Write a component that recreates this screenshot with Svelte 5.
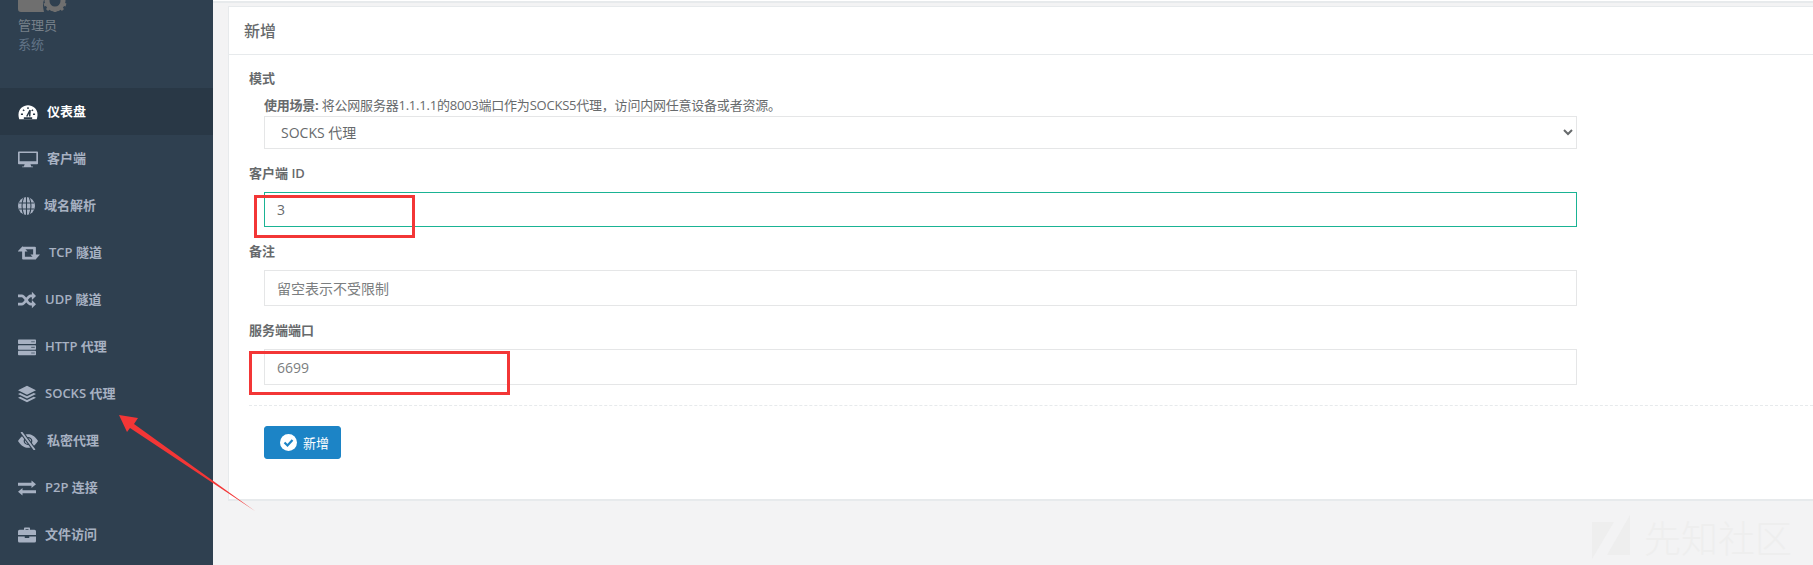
<script>
  const navItems = [
    { icon: "dashboard", label: "仪表盘", w: 20, active: true },
    { icon: "desktop", label: "客户端", w: 20 },
    { icon: "globe", label: "域名解析", w: 17 },
    { icon: "retweet", label: "TCP 隧道", w: 22 },
    { icon: "shuffle", label: "UDP 隧道", w: 18 },
    { icon: "server", label: "HTTP 代理", w: 18 },
    { icon: "layers", label: "SOCKS 代理", w: 18 },
    { icon: "eyeslash", label: "私密代理", w: 20 },
    { icon: "exchange", label: "P2P 连接", w: 18 },
    { icon: "briefcase", label: "文件访问", w: 18 }
  ];
</script>

<div class="page">
  <aside class="sidebar">
    <div class="profile">
      <svg class="logo" width="50" height="13" viewBox="0 0 50 13">
        <path d="M0 0h26q-2 4 0 12H3q-3 0-3-3z" fill="#6f6f6f" />
        <circle cx="37" cy="1" r="8" fill="none" stroke="#6f6f6f" stroke-width="5" />
        <path d="M37 9v3M29 4l-3 1M45 4l3 1M31 8l-2 2M43 8l2 2" stroke="#6f6f6f" stroke-width="3" />
      </svg>
      <div class="role">管理员</div>
      <div class="system">系统</div>
    </div>
    <nav>
      {#each navItems as item}
        <div class="nav-item" class:active={item.active}>
          <svg width={item.w} height="18" viewBox="0 0 24 24" preserveAspectRatio="none" fill="currentColor">
            {#if item.icon === "dashboard"}
              <path d="M1.500 21.500C-2 10 5 3 12 3s14 7 10.500 18.500z" />
              <path d="M3.500 15h2.500M6 9l1.500 1.500M12 5.500V8M18 9l-1.500 1.500M18 15h2.500M10.500 18l4-8.500-.5 8.500" stroke="#293846" stroke-width="1.800" fill="none" />
              <rect x="7" y="19" width="10" height="2.500" fill="#293846" />
            {:else if item.icon === "desktop"}
              <path d="M1 2h22a1 1 0 0 1 1 1v15a1 1 0 0 1-1 1h-8l1 3h2v1H5v-1h2l1-3H1a1 1 0 0 1-1-1V3a1 1 0 0 1 1-1zm1 2v11h20V4z" fill-rule="evenodd" />
            {:else if item.icon === "globe"}
              <circle cx="12" cy="12" r="12" />
              <path d="M12 0v24M8 .5C5 8 5 16 8 23.500M16 .5c3 7.500 3 15.500 0 23M1 8h22M1 16h22" stroke="#2f4050" stroke-width="1.500" fill="none" />
            {:else if item.icon === "retweet"}
              <path d="M5 3l5.500 7H7.500v7H16l3 3.500H5.500a1 1 0 0 1-1-1V10H-.5zM19 21l-5.500-7h3V7H8L5 3.500h13.500a1 1 0 0 1 1 1V14h4.500z" />
            {:else if item.icon === "shuffle"}
              <path d="M0 6.500h5c5 0 7 11 12 11h2M0 17.500h5c5 0 7-11 12-11h2" fill="none" stroke="currentColor" stroke-width="3.500" />
              <path d="M18.500 1l5.500 5.500-5.500 5.500zM18.500 12l5.500 5.500-5.500 5.500z" />
            {:else if item.icon === "server"}
              <path d="M1 2h22a1 1 0 0 1 1 1v4a1 1 0 0 1-1 1H1a1 1 0 0 1-1-1V3a1 1 0 0 1 1-1zM1 9.500h22a1 1 0 0 1 1 1v4a1 1 0 0 1-1 1H1a1 1 0 0 1-1-1v-4a1 1 0 0 1 1-1zM1 17h22a1 1 0 0 1 1 1v4a1 1 0 0 1-1 1H1a1 1 0 0 1-1-1v-4a1 1 0 0 1 1-1z" />
              <path d="M18 5h1.500M20.500 5H22M18 12.500h1.500M20.500 12.500H22M18 20h1.500M20.500 20H22" stroke="#2f4050" stroke-width="1.500" />
            {:else if item.icon === "layers"}
              <path d="M12 1l12 6-12 6L0 7zM3 10.500l9 4.500 9-4.500 3 1.500-12 6-12-6zM3 15.500l9 4.500 9-4.500 3 1.500-12 6-12-6z" />
            {:else if item.icon === "eyeslash"}
              <path d="M0 12C4 5 8 3 12 3s8 2 12 9c-4 7-8 9-12 9S4 19 0 12z" />
              <circle cx="12" cy="12" r="4.500" fill="none" stroke="#2f4050" stroke-width="1.500" />
              <path d="M4 0l16 24" stroke="#2f4050" stroke-width="5" />
              <path d="M4 0l16 24" stroke="currentColor" stroke-width="2.200" />
            {:else if item.icon === "exchange"}
              <path d="M24 7l-6-5v3H0v4h18v3zM0 17l6-5v3h18v4H6v3z" />
            {:else if item.icon === "briefcase"}
              <path d="M8 5V3a1 1 0 0 1 1-1h6a1 1 0 0 1 1 1v2h6a2 2 0 0 1 2 2v5H0V7a2 2 0 0 1 2-2zm2 0h4V4h-4zM0 14h9v2h6v-2h9v6a2 2 0 0 1-2 2H2a2 2 0 0 1-2-2z" fill-rule="evenodd" />
            {/if}
          </svg>
          <span>{item.label}</span>
        </div>
      {/each}
    </nav>
  </aside>

  <main class="content">
    <div class="topbar"></div>
    <section class="card">
      <h5 class="card-title">新增</h5>
      <form class="card-body">
        <div class="label first">模式</div>
        <div class="hint"><b>使用场景:</b> 将公网服务器1.1.1.1的8003端口作为SOCKS5代理，访问内网任意设备或者资源。</div>
        <select class="control select">
          <option>SOCKS 代理</option>
        </select>

        <div class="label">客户端 ID</div>
        <input class="control focus" value="3" />

        <div class="label">备注</div>
        <input class="control tall" placeholder="留空表示不受限制" />

        <div class="label">服务端端口</div>
        <input class="control tall" placeholder="6699" />

        <div class="dashed"></div>

        <button type="button" class="btn">
          <svg width="17" height="17" viewBox="0 0 17 17">
            <circle cx="8.500" cy="8.500" r="8.500" fill="#fff" />
            <path d="M4.500 8.500l3 3 5-5.500" fill="none" stroke="#1c84c6" stroke-width="2.200" />
          </svg>
          新增
        </button>
      </form>
    </section>
  </main>

  <!-- annotations drawn on top of the screenshot -->
  <div class="mark mark-client"></div>
  <div class="mark mark-port"></div>
  <svg class="arrow" width="300" height="120" viewBox="0 0 300 120">
    <polygon points="119,15 138,18 134,24 255,111 130,28 127,32" fill="#f33636" />
  </svg>

  <div class="watermark">
    <svg width="40" height="44" viewBox="0 0 40 44">
      <path d="M0 7h22L0 44zM38 0v40H15z" fill="#eeeeee" />
    </svg>
    <span>先知社区</span>
  </div>
</div>

<style>
  :global(body) {
    margin: 0;
    background: #f3f3f4;
    overflow: hidden;
  }

  .page {
    position: relative;
    display: flex;
    width: 1813px;
    height: 565px;
    overflow: hidden;
    font-family: "Open Sans", "Noto Sans CJK SC", sans-serif;
    color: #676a6c;
    font-size: 13px;
  }

  .sidebar {
    width: 213px;
    flex: none;
    background: #2f4050;
  }

  .profile {
    height: 88px;
    padding-left: 18px;
    box-sizing: border-box;
  }

  .logo {
    display: block;
  }

  .role,
  .system {
    font-size: 13px;
    line-height: 19px;
  }

  .role {
    margin-top: 3px;
    color: #77808a;
  }

  .system {
    color: #627487;
  }

  .nav-item {
    display: flex;
    align-items: center;
    gap: 9px;
    height: 47px;
    padding-left: 18px;
    color: #a7b1c2;
    font-weight: 600;
    font-size: 13px;
  }

  .nav-item span {
    padding-bottom: 2px;
  }

  .nav-item.active {
    background: #293846;
    color: #fff;
  }

  .content {
    flex: 1;
    min-width: 0;
  }

  .topbar {
    height: 1px;
    background: #fff;
    border-bottom: 2px solid #e7eaec;
  }

  .card {
    margin: 3px 0 0 15px;
    background: #fff;
    border: 1px solid #e7eaec;
    border-width: 1px 0 2px 1px;
    height: 495px;
    box-sizing: border-box;
  }

  .card-title {
    margin: 0;
    height: 47px;
    padding-left: 15px;
    border-bottom: 1px solid #e7eaec;
    font-size: 16px;
    font-weight: 500;
    line-height: 49px;
  }

  .card-body {
    padding-left: 20px;
  }

  .label {
    height: 18px;
    margin-top: 16px;
    line-height: 16px;
    font-weight: 600;
    font-size: 13px;
  }

  .label.first {
    margin-top: 15px;
  }

  .hint {
    height: 18px;
    margin: 10px 0 0 15px;
    line-height: 15px;
    font-size: 13px;
    letter-spacing: -0.22px;
    white-space: nowrap;
  }

  .control {
    display: block;
    box-sizing: border-box;
    width: 1313px;
    height: 35px;
    margin: 9px 0 0 15px;
    padding: 0 12px;
    border: 1px solid #e5e6e7;
    background: #fff;
    color: #676a6c;
    font: inherit;
    font-size: 14px;
    outline: none;
  }

  .control::placeholder {
    color: #7b7e80;
    opacity: 1;
  }

  .select {
    height: 33px;
    margin-top: 0;
    padding-left: 12px;
    font-size: 14px;
  }

  .focus {
    border-color: #1ab394;
  }

  .tall {
    height: 36px;
  }

  .dashed {
    margin-top: 20px;
    border-top: 1px dashed #e7eaec;
  }

  .btn {
    display: flex;
    align-items: center;
    gap: 6px;
    width: 77px;
    height: 33px;
    margin: 20px 0 0 15px;
    padding: 0 0 0 15px;
    border: 1px solid #1c84c6;
    border-radius: 3px;
    background: #1c84c6;
    color: #fff;
    font: inherit;
    font-size: 13px;
    box-sizing: border-box;
  }

  .mark {
    position: absolute;
    border: 3px solid #f33636;
    box-sizing: border-box;
  }

  .mark-client {
    left: 254px;
    top: 195px;
    width: 161px;
    height: 43px;
  }

  .mark-port {
    left: 249px;
    top: 351px;
    width: 261px;
    height: 44px;
  }

  .arrow {
    position: absolute;
    left: 0;
    top: 400px;
  }

  .watermark {
    position: absolute;
    left: 1592px;
    top: 515px;
    display: flex;
    align-items: center;
    gap: 12px;
    color: #eeeeee;
    font-family: "Noto Sans CJK SC", sans-serif;
    font-size: 37px;
    font-weight: 300;
    line-height: 44px;
  }
</style>
